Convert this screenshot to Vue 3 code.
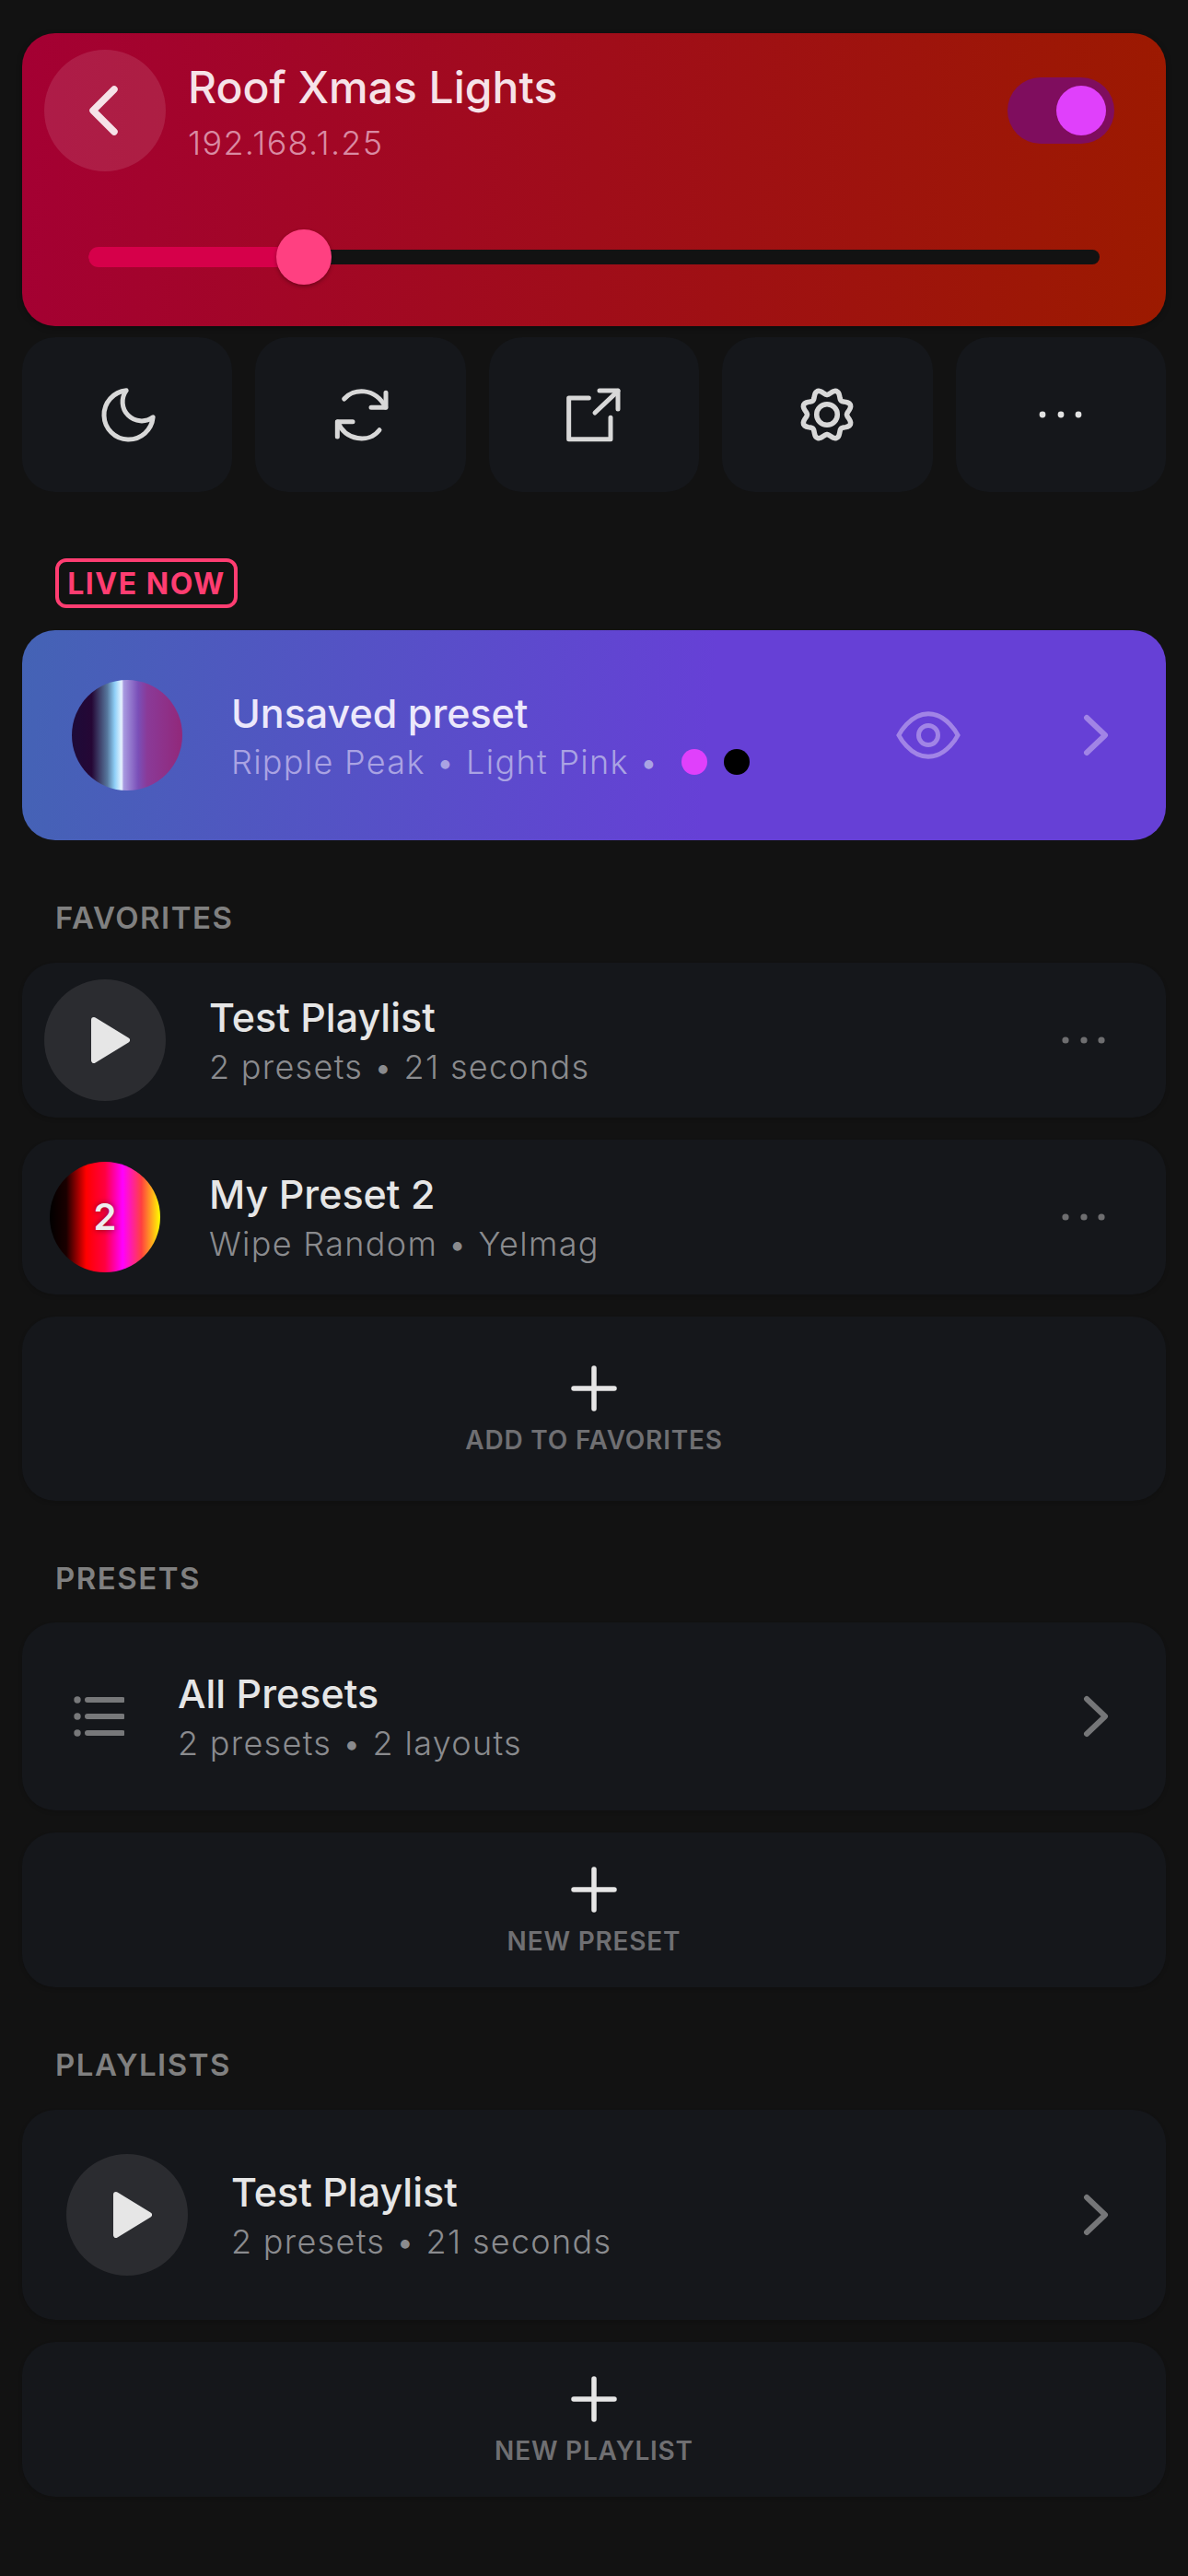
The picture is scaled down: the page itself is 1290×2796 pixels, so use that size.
<template>
  <div class="page">
    <!-- device header -->
    <div class="hero">
      <div class="hero-top">
        <button class="back">
          <svg width="40" height="62" viewBox="0 0 40 62"><path d="M30 8 L7 31 L30 54" class="line" stroke="#f6e2e8" stroke-width="7.5" /></svg>
        </button>
        <div class="hero-text">
          <div class="hero-title">Roof Xmas Lights</div>
          <div class="hero-ip">192.168.1.25</div>
        </div>
        <div class="toggle"><span class="knob"></span></div>
      </div>
      <div class="slider">
        <div class="slider-fill" :style="{ width: brightness + 'px' }"></div>
        <div class="slider-thumb" :style="{ left: brightness - 30 + 'px' }"></div>
      </div>
    </div>

    <div class="actions">
      <button class="action">
        <svg width="71" height="71" viewBox="0 0 24 24" class="ico moon"><path d="M21 12.79A9 9 0 1 1 11.21 3 7 7 0 0 0 21 12.79z" /></svg>
      </button>
      <button class="action">
        <svg width="80" height="80" viewBox="0 0 24 24" class="ico">
          <path d="M20.1 4.9V9.7H15.3" />
          <path d="M6.5 6.9C9.5 3.4 16.5 3 20 9.6" />
          <path d="M4.3 19.2V14.3H9.3" />
          <path d="M4.4 14.4C7 20.5 14.5 21.5 18 17" />
        </svg>
      </button>
      <button class="action">
        <svg width="80" height="80" viewBox="0 0 24 24" class="ico">
          <path d="M10.3 6.6H3.8V20H17.4V13" />
          <path d="M12.3 11.4L19.8 4.3" />
          <path d="M13.8 4.2H19.8V10.2" />
        </svg>
      </button>
      <button class="action">
        <svg width="70" height="70" viewBox="0 0 70 70" class="gear">
          <circle cx="35" cy="35" r="11.3" />
          <path :d="gearPath" />
        </svg>
      </button>
      <button class="action">
        <svg width="54" height="10" viewBox="0 0 54 10"><circle cx="7" cy="5" r="3.4" fill="#e2e2e2" /><circle cx="27" cy="5" r="3.4" fill="#e2e2e2" /><circle cx="46" cy="5" r="3.4" fill="#e2e2e2" /></svg>
      </button>
    </div>

    <!-- live now -->
    <div class="badge">LIVE NOW</div>
    <div class="live">
      <div class="thumb thumb-ripple"></div>
      <div class="live-text">
        <div class="title live-title">Unsaved preset</div>
        <div class="sub live-sub">
          <span>Ripple Peak • Light Pink •</span>
          <span class="swatch pink"></span>
          <span class="swatch black"></span>
        </div>
      </div>
      <svg class="eye" width="70" height="70" viewBox="0 0 24 24">
        <path d="M1 12s4-8 11-8 11 8 11 8-4 8-11 8-11-8-11-8z" />
        <circle cx="12" cy="12" r="3.6" />
      </svg>
      <svg class="chev" width="28" height="48" viewBox="0 0 28 48"><path d="M4 5 L24 24 L4 43" class="line" stroke="#a184e6" stroke-width="6" /></svg>
    </div>

    <!-- favorites -->
    <div class="label">FAVORITES</div>
    <div class="row row-fav">
      <div class="play">
        <svg width="42" height="50" viewBox="0 0 42 50"><path d="M3 3 L39 25 L3 47 Z" class="tri" /></svg>
      </div>
      <div class="text">
        <div class="title">Test Playlist</div>
        <div class="sub">2 presets • 21 seconds</div>
      </div>
      <svg class="more" width="54" height="10" viewBox="0 0 54 10"><circle cx="7" cy="5" r="3.6" /><circle cx="27" cy="5" r="3.6" /><circle cx="46" cy="5" r="3.6" /></svg>
    </div>
    <div class="row row-fav gap">
      <div class="thumb-wrap">
        <div class="thumb thumb-wipe">2</div>
      </div>
      <div class="text">
        <div class="title">My Preset 2</div>
        <div class="sub">Wipe Random • Yelmag</div>
      </div>
      <svg class="more" width="54" height="10" viewBox="0 0 54 10"><circle cx="7" cy="5" r="3.6" /><circle cx="27" cy="5" r="3.6" /><circle cx="46" cy="5" r="3.6" /></svg>
    </div>
    <div class="add add-tall gap">
      <svg width="50" height="50" viewBox="0 0 50 50"><path d="M25 3V47M3 25H47" class="plus" /></svg>
      <div class="add-label">ADD TO FAVORITES</div>
    </div>

    <!-- presets -->
    <div class="label">PRESETS</div>
    <div class="row row-all">
      <svg class="list" width="60" height="60" viewBox="0 0 60 60">
        <circle cx="9" cy="12" r="3.7" /><circle cx="9" cy="30" r="3.7" /><circle cx="9" cy="48" r="3.7" />
        <path d="M20 12H58M20 30H58M20 48H58" />
      </svg>
      <div class="text">
        <div class="title">All Presets</div>
        <div class="sub">2 presets • 2 layouts</div>
      </div>
      <svg class="chev" width="28" height="48" viewBox="0 0 28 48"><path d="M4 5 L24 24 L4 43" class="line" stroke="#757678" stroke-width="6" /></svg>
    </div>
    <div class="add gap">
      <svg width="50" height="50" viewBox="0 0 50 50"><path d="M25 3V47M3 25H47" class="plus" /></svg>
      <div class="add-label">NEW PRESET</div>
    </div>

    <!-- playlists -->
    <div class="label">PLAYLISTS</div>
    <div class="row row-pl">
      <div class="play">
        <svg width="42" height="50" viewBox="0 0 42 50"><path d="M3 3 L39 25 L3 47 Z" class="tri" /></svg>
      </div>
      <div class="text">
        <div class="title">Test Playlist</div>
        <div class="sub">2 presets • 21 seconds</div>
      </div>
      <svg class="chev" width="28" height="48" viewBox="0 0 28 48"><path d="M4 5 L24 24 L4 43" class="line" stroke="#757678" stroke-width="6" /></svg>
    </div>
    <div class="add gap">
      <svg width="50" height="50" viewBox="0 0 50 50"><path d="M25 3V47M3 25H47" class="plus" /></svg>
      <div class="add-label">NEW PLAYLIST</div>
    </div>
  </div>
</template>

<script setup>
import { ref } from 'vue';

// thumb centre, px from the left end of the track
const brightness = ref(234);

// wavy 8-tooth outline for the settings icon
const gearPoints = [];
for (let i = 0; i < 96; i++) {
  const a = (i / 96) * Math.PI * 2;
  const r = 24.5 + 3 * Math.cos(8 * (a - Math.PI / 8));
  gearPoints.push((35 + r * Math.cos(a)).toFixed(2) + ' ' + (35 + r * Math.sin(a)).toFixed(2));
}
const gearPath = 'M' + gearPoints.join('L') + 'Z';
</script>

<style>
html,
body {
  background: #121212;
}
</style>

<style scoped>
.page {
  box-sizing: border-box;
  width: 1290px;
  min-height: 2796px;
  padding: 36px 24px;
  background: #121212;
  font-family: Inter, 'Liberation Sans', sans-serif;
  color: #e6e6e6;
}

button {
  border: none;
  padding: 0;
  font: inherit;
}

.line {
  fill: none;
  stroke-linecap: round;
  stroke-linejoin: round;
}

/* header card */
.hero {
  box-sizing: border-box;
  height: 318px;
  padding: 18px 24px 0;
  border-radius: 36px;
  background: linear-gradient(95deg, #a40033 0%, #9c1a00 100%);
  box-shadow: 0 2px 6px rgba(0, 0, 0, 0.3);
}

.hero-top {
  display: flex;
  align-items: center;
}

.back {
  display: flex;
  align-items: center;
  justify-content: center;
  width: 132px;
  height: 132px;
  border-radius: 50%;
  background: rgba(255, 255, 255, 0.11);
}

.hero-text {
  flex: 1;
  margin-left: 24px;
  padding-top: 4px;
}

.hero-title {
  font-size: 48px;
  font-weight: 550;
  line-height: 60px;
  color: #f6e2e8;
}

.hero-ip {
  margin-top: 5px;
  font-size: 36px;
  font-weight: 300;
  line-height: 50px;
  letter-spacing: 1.3px;
  color: #d98ba3;
}

.toggle {
  box-sizing: border-box;
  display: flex;
  align-items: center;
  justify-content: flex-end;
  width: 116px;
  height: 72px;
  margin-right: 32px;
  padding-right: 9px;
  border-radius: 36px;
  background: #7f0d5e;
}

.knob {
  width: 54px;
  height: 54px;
  border-radius: 50%;
  background: #e040fb;
}

.slider {
  position: relative;
  height: 16px;
  margin: 85px 48px 0;
  border-radius: 8px;
  background: #121212;
}

.slider-fill {
  position: absolute;
  left: 0;
  top: -3px;
  height: 22px;
  border-radius: 11px 0 0 11px;
  background: #d6004a;
}

.slider-thumb {
  position: absolute;
  top: -22px;
  width: 60px;
  height: 60px;
  border-radius: 50%;
  background: #ff4081;
  box-shadow: 0 2px 4px rgba(0, 0, 0, 0.3);
}

/* action buttons */
.actions {
  display: grid;
  grid-template-columns: repeat(5, 1fr);
  gap: 25px;
  margin-top: 12px;
}

.action {
  display: flex;
  align-items: center;
  justify-content: center;
  height: 168px;
  border-radius: 36px;
  background: #15171b;
}

.ico {
  fill: none;
  stroke: #d8d8d8;
  stroke-width: 1.5;
  stroke-linecap: round;
  stroke-linejoin: round;
}

.moon {
  margin-left: 2px;
  stroke-width: 1.7;
}

.gear {
  fill: none;
  stroke: #d8d8d8;
  stroke-width: 5.5;
  stroke-linejoin: round;
}

/* live now */
.badge {
  box-sizing: border-box;
  display: flex;
  align-items: center;
  justify-content: center;
  width: 198px;
  height: 54px;
  margin: 72px 0 0 36px;
  border: 4px solid #ff3d71;
  border-radius: 12px;
  font-size: 32px;
  font-weight: 700;
  letter-spacing: 1.5px;
  color: #ff3d71;
}

.live {
  display: flex;
  align-items: center;
  box-sizing: border-box;
  height: 228px;
  margin-top: 24px;
  padding: 0 62px 0 54px;
  border-radius: 36px;
  background: linear-gradient(95deg, #4463b5 0%, #6640d6 60%);
}

.thumb {
  flex: none;
  width: 120px;
  height: 120px;
  border-radius: 50%;
}

.thumb-ripple {
  background: linear-gradient(90deg, #1d0a38 0%, #250735 18%, #56769c 32%, #8fd0f8 39%, #e8f4ff 45%, #a89ae0 47%, #7a4fb8 60%, #8a3a98 68%, #92287a 100%);
}

.thumb-wipe {
  display: flex;
  align-items: center;
  justify-content: center;
  background: linear-gradient(90deg, #000 0%, #1a0000 15%, #ff0000 33%, #ff0040 50%, #ff00ff 66%, #ff4040 83%, #ffff00 100%);
  font-size: 40px;
  font-weight: 600;
  color: #eee;
  text-shadow: 0 0 6px rgba(0, 0, 0, 0.5);
}

.live-text {
  flex: 1;
  margin-left: 53px;
  padding-top: 4px;
}

.live-title {
  color: #ece8fb;
}

.title {
  font-size: 43px;
  font-weight: 500;
  line-height: 50px;
}

.sub {
  margin-top: 4px;
  font-size: 36px;
  font-weight: 300;
  line-height: 50px;
  letter-spacing: 1.3px;
  color: #8a8b8e;
}

.live-sub {
  display: flex;
  align-items: center;
  margin-top: 3px;
  color: #aaa3e3;
}

.swatch {
  width: 28px;
  height: 28px;
  margin-left: 18px;
  border-radius: 50%;
}

.pink {
  margin-left: 24px;
  background: #e040fb;
}

.black {
  background: #000;
}

.eye {
  margin-right: 133px;
  fill: none;
  stroke: #a184e6;
  stroke-width: 1.7;
}

/* sections */
.label {
  height: 40px;
  margin: 64px 0 28.5px 36px;
  font-size: 33px;
  font-weight: 600;
  line-height: 40px;
  letter-spacing: 1.5px;
  color: #808080;
}

.row {
  display: flex;
  align-items: center;
  box-sizing: border-box;
  border-radius: 36px;
  background: #15171b;
  box-shadow: 0 2px 4px rgba(0, 0, 0, 0.15);
}

.gap {
  margin-top: 24px;
}

.row-fav {
  height: 168px;
  padding: 0 62px 0 24px;
}

.row-all {
  height: 204px;
  padding: 0 62px 0 51px;
}

.row-pl {
  height: 228px;
  padding: 0 62px 0 48px;
}

.play {
  flex: none;
  display: flex;
  align-items: center;
  justify-content: center;
  width: 132px;
  height: 132px;
  border-radius: 50%;
  background: #2b2c30;
}

.play svg {
  margin-left: 12px;
}

.tri {
  fill: #e6e6e6;
  stroke: #e6e6e6;
  stroke-width: 6;
  stroke-linejoin: round;
}

.thumb-wrap {
  flex: none;
  display: flex;
  justify-content: center;
  width: 132px;
}

.text {
  flex: 1;
  padding-top: 4px;
}

.row-fav .text {
  margin-left: 47px;
}

.row-all .text {
  margin-left: 58px;
}

.row-pl .text {
  margin-left: 47px;
}

.more {
  fill: #6e6e70;
}

.list {
  flex: none;
  fill: #77787a;
  stroke: #77787a;
  stroke-width: 0;
}

.list path {
  fill: none;
  stroke-width: 6;
  stroke-linecap: round;
}

/* add buttons */
.add {
  display: flex;
  flex-direction: column;
  align-items: center;
  box-sizing: border-box;
  height: 168px;
  padding-top: 37px;
  border-radius: 36px;
  background: #15171b;
  box-shadow: 0 2px 4px rgba(0, 0, 0, 0.15);
}

.add-tall {
  height: 200px;
  padding-top: 53px;
}

.plus {
  fill: none;
  stroke: #e6e6e6;
  stroke-width: 5.5;
  stroke-linecap: round;
}

.add-label {
  margin-top: 14px;
  font-size: 28px;
  font-weight: 600;
  line-height: 34px;
  letter-spacing: 0.8px;
  color: #6f6f72;
}
</style>
